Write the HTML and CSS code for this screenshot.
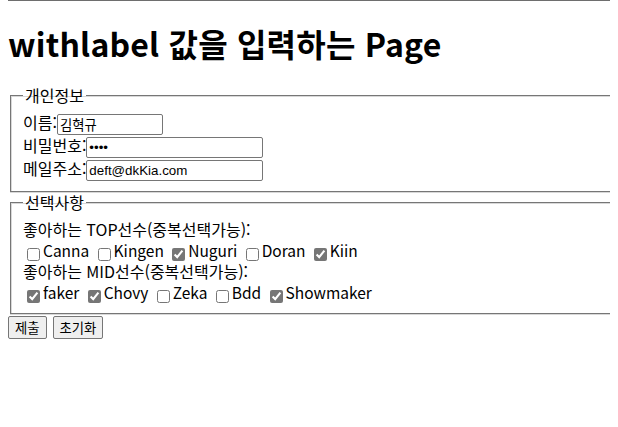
FILE: index.html
```html
<!DOCTYPE html>
<html lang="ko">
  <head>
    <meta charset="UTF-8" />
    <title>withlabel</title>
    <link rel="stylesheet" href="styles.css">
  </head>
  <body>
    <div class="top-line"></div>
    <h1 class="title">withlabel 값을 입력하는 Page</h1>

    <form class="form">
      <fieldset class="group group-info">
        <legend>개인정보</legend>
        <div class="row">
          <label for="name">이름:</label><input type="text" id="name" class="field field-short" value="김혁규" />
        </div>
        <div class="row">
          <label for="pw">비밀번호:</label><input type="password" id="pw" class="field" value="1234" />
        </div>
        <div class="row">
          <label for="mail">메일주소:</label><input type="text" id="mail" class="field" value="deft@dkKia.com" />
        </div>
      </fieldset>

      <fieldset class="group group-pick">
        <legend>선택사항</legend>
        <div class="line">좋아하는 TOP선수(중복선택가능):</div>
        <div class="line opts">
          <input type="checkbox" id="t1" class="check" /><label for="t1">Canna</label>
          <input type="checkbox" id="t2" class="check" /><label for="t2">Kingen</label>
          <input type="checkbox" id="t3" class="check" checked /><label for="t3">Nuguri</label>
          <input type="checkbox" id="t4" class="check" /><label for="t4">Doran</label>
          <input type="checkbox" id="t5" class="check" checked /><label for="t5">Kiin</label>
        </div>
        <div class="line">좋아하는 MID선수(중복선택가능):</div>
        <div class="line opts">
          <input type="checkbox" id="m1" class="check" checked /><label for="m1">faker</label>
          <input type="checkbox" id="m2" class="check" checked /><label for="m2">Chovy</label>
          <input type="checkbox" id="m3" class="check" /><label for="m3">Zeka</label>
          <input type="checkbox" id="m4" class="check" /><label for="m4">Bdd</label>
          <input type="checkbox" id="m5" class="check" checked /><label for="m5">Showmaker</label>
        </div>
      </fieldset>

      <div class="actions">
        <button type="submit" class="btn">제출</button>
        <button type="reset" class="btn">초기화</button>
      </div>
    </form>
  </body>
</html>
```

FILE: styles.css
```css
body {
  margin: 0 8px;
  font-family: "Noto Sans CJK KR", "Noto Sans", sans-serif;
  font-size: 16px;
  color: #000000;
  background-color: #ffffff;
}

.top-line {
  margin: 0 -8px;
  border-top: 1px solid #6e6e6e;
}

.title {
  font-size: 32px;
  font-weight: 700;
  line-height: 40px;
  letter-spacing: 0.2px;
  margin: 22px 0 22px;
  white-space: nowrap;
}

/* the boxes run to the right edge of the window, with no right border */
.group {
  min-width: 0;
  margin: 0 -8px 0 2px;
  padding: 5px 12px 10px;
  border: 1px solid #767676;
  border-right: none;
  box-shadow: inset 1px 1px 0 #d8d8d8, 0 1px 0 #d8d8d8;
}

.group-info {
  padding-bottom: 11px;
}

.group-pick {
  padding-top: 6px;
}

.group legend {
  padding: 0 2px;
  line-height: 21px;
}

.row {
  height: 23px;
  line-height: 23px;
}

.field {
  width: 177px;
  height: 21px;
  box-sizing: border-box;
  padding: 1px 2px;
  border: 1px solid #767676;
  border-radius: 2px;
  font-family: "Liberation Sans", "Noto Sans CJK KR", sans-serif;
  font-size: 13.33px;
  vertical-align: middle;
}

.field-short {
  width: 106px;
}

.line {
  height: 21px;
  line-height: 21px;
  white-space: nowrap;
}

.opts {
  font-size: 15.5px;
}

.check {
  width: 13px;
  height: 13px;
  margin: 3px 3px 3px 4px;
  accent-color: #767676;
  vertical-align: -4px;
}

.actions {
  margin-top: 2px;
  display: flex;
  gap: 6px;
}

.btn {
  height: 23px;
  padding: 1px 6px;
  border: 1px solid #767676;
  border-radius: 2px;
  background-color: #efefef;
  font-family: "Noto Sans CJK KR", sans-serif;
  font-size: 13.33px;
  line-height: 18px;
}
```
